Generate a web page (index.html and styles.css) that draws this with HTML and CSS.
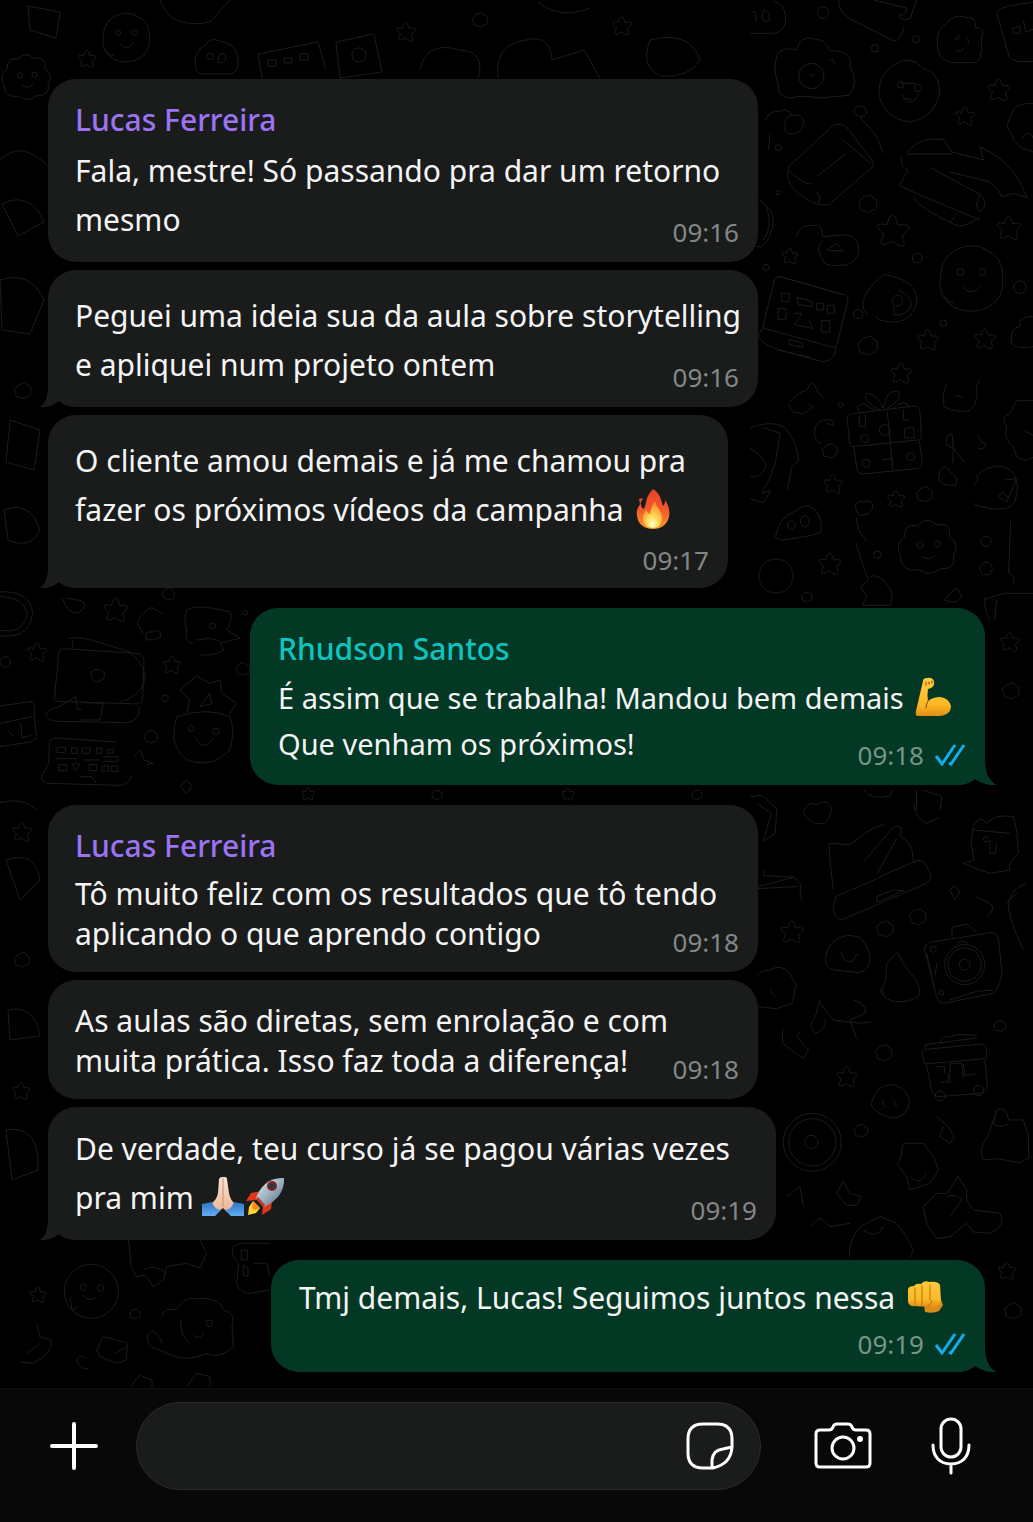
FILE: index.html
```html
<!DOCTYPE html>
<html lang="pt-BR">
<head>
<meta charset="utf-8">
<meta name="viewport" content="width=device-width, initial-scale=1">
<title>Conversa</title>
<link rel="stylesheet" href="styles.css">
</head>
<body>
<svg class="defs" aria-hidden="true">
  <defs>
    <linearGradient id="flame" x1="0" y1="0" x2="0" y2="1"><stop offset="0" stop-color="#e8402a"/><stop offset=".5" stop-color="#f4572a"/><stop offset="1" stop-color="#fb9a2c"/></linearGradient>
    <radialGradient id="glow" cx=".5" cy=".85" r=".75"><stop offset="0" stop-color="#fffde0"/><stop offset=".35" stop-color="#ffe25a"/><stop offset="1" stop-color="#fb8a2a"/></radialGradient>
    <linearGradient id="skin" x1="0" y1="0" x2="0" y2="1"><stop offset="0" stop-color="#ffcb3d"/><stop offset=".7" stop-color="#fcb827"/><stop offset="1" stop-color="#e08e14"/></linearGradient>
    <linearGradient id="pale" x1="0" y1="0" x2="0" y2="1"><stop offset="0" stop-color="#fbe3d0"/><stop offset="1" stop-color="#e9b597"/></linearGradient>
    <linearGradient id="sleeve" x1="0" y1="0" x2="0" y2="1"><stop offset="0" stop-color="#2f74c4"/><stop offset="1" stop-color="#63aef2"/></linearGradient>
    <linearGradient id="hull" x1="0" y1="0" x2="1" y2="1"><stop offset="0" stop-color="#dfe8ee"/><stop offset=".5" stop-color="#9fb2c2"/><stop offset="1" stop-color="#46607c"/></linearGradient>
  </defs>
  <symbol id="tail-in" viewBox="0 0 38 30"><path d="M8 0V8C8 18 6 26 0 30C7 31 14 28 19 24C24 28 30 30 38 30V0Z"/></symbol>
  <symbol id="tail-out" viewBox="0 0 40 30"><path d="M28 0V4C28 16 31 26 40 30C32 31 23 28 18 24C13 28 8 30 0 30V0Z"/></symbol>
  <symbol id="ticks" viewBox="0 0 32 24"><path d="M2 13L8 21L21 2M15 20L17 21L30 2"/></symbol>
  <symbol id="star" class="doodle" viewBox="-20 -20 40 40" overflow="visible"><path d="M-1-16Q2-17 5-6Q15-7 16-4Q16-1 9 4Q13 14 10 15Q7 16-1 10Q-11 16-12 12Q-12 8-9 3Q-17-3-15-6Q-13-8-6-6Q-4-15-1-16Z"/></symbol>
  <symbol id="bloom" class="doodle" viewBox="-20 -20 40 40" overflow="visible"><path d="M-2-13Q6-18 9-9Q17-9 14-1Q17 9 8 10Q1 17-5 11Q-15 13-13 3Q-19-4-10-8Q-8-14-2-13Z"/></symbol>
  <symbol id="face" class="doodle" viewBox="-40 -40 80 80" overflow="visible"><path d="M-14-35Q4-42 18-33Q38-24 36 0Q38 22 20 32Q0 42-20 32Q-39 20-35-4Q-34-26-14-35Z"/><circle cx="-12" cy="-8" r="4"/><circle cx="13" cy="-8" r="4"/><path d="M-10 8Q0 22 12 7M-30 20Q-25 28-19 27"/></symbol>
  <symbol id="puff" class="doodle" viewBox="-40 -40 80 80" overflow="visible"><path d="M-34 10Q-42-4-29-14Q-30-32-12-29Q0-42 12-30Q32-34 29-14Q43-6 34 9Q38 28 17 27Q2 38-10 28Q-34 32-34 10Z"/><circle cx="-9" cy="-4" r="4"/><circle cx="13" cy="-5" r="4"/><path d="M-7 11Q4 18 11 9"/></symbol>
  <symbol id="blob" class="doodle" viewBox="-40 -40 80 80" overflow="visible"><path d="M-32 14Q-36-8-17-18Q-8-30 2-24Q28-22 31 2Q34 22 20 25H-22Q-31 23-32 14Z"/><circle cx="-10" cy="-1" r="5"/><path d="M4-4Q14-8 13 4Q8 12 1 7Z"/></symbol>
</svg>

<div class="chat">
  <svg class="wallpaper" viewBox="0 0 1033 1390" preserveAspectRatio="xMidYMin slice" aria-hidden="true">
    <!-- right edge, top -->
    <g transform="translate(750 0) scale(.3333)">
      <path d="M0 100H70Q110 96 107 48Q100 8 70 4M6 38Q20 22 18 66M40 30Q60 30 58 62Q38 70 36 48ZM266 0Q262 32 300 56L430 122Q450 128 462 82M370 0L470 24Q470 46 448 46Q450 66 480 56L500 0"/>
      <path d="M84 160Q100 140 140 150Q150 108 185 116Q230 116 238 152Q310 150 300 200Q330 250 296 286L210 294Q160 284 120 294Q80 290 84 250Q66 200 84 160Z"/><circle cx="184" cy="228" r="38"/><path d="M176 222Q184 236 196 222M238 180Q256 176 252 192"/>
      <path d="M590 70Q610 40 645 52Q680 48 676 82Q708 80 694 120Q700 190 670 188H606Q560 180 562 130Q560 88 590 70ZM615 110Q620 132 628 104M650 110Q660 130 652 134M618 150Q640 160 640 142"/>
      <path d="M740 40Q744 22 800 14L849 6M740 40L778 170Q790 190 849 184M786 86L810 78V100H790ZM820 60L828 96L849 88"/>
      <path d="M430 196Q480 160 520 206Q560 210 570 270Q560 350 480 366Q400 356 386 280Q386 226 430 196ZM450 250H500M456 284Q480 330 508 280M460 296L486 298"/><circle cx="452" cy="254" r="10"/><circle cx="504" cy="264" r="11"/>
      <path d="M116 500L250 376Q280 364 296 390L366 480Q376 494 360 508L236 614Q200 620 160 590Q120 570 112 530ZM200 530L290 460M274 416L362 490M116 512Q170 560 184 550M200 576Q220 600 200 612"/>
      <path d="M470 460Q500 420 540 418H580L606 456L700 480L690 440L740 468Q790 510 806 540L832 594L790 580L754 590Q750 570 720 546L600 516M454 470Q450 500 474 510L448 556Q470 570 690 660M490 592Q510 626 610 672Q640 690 690 650M544 504L690 584Q720 610 690 636Q670 620 690 584M606 462H470M620 640L600 670"/>
      <path d="M330 350Q300 340 318 322Q340 310 350 334Q350 350 330 350L380 410L400 460M46 360Q60 330 90 334Q110 320 125 346Q160 340 162 370Q154 402 124 402Q98 400 106 376Q100 354 125 346M60 400L56 450"/>
      <path d="M140 710Q150 670 190 676Q220 670 218 710L290 704Q330 710 326 760Q310 800 270 796Q220 804 214 770Q196 740 218 722M230 750L260 730L280 754Z"/>
      <path d="M90 830Q76 830 72 846L38 984L250 1042Q260 1040 262 1030L294 900Q294 886 280 884ZM36 986L24 1010Q40 1036 90 1050L220 1086Q256 1080 258 1042M118 1018L158 1030V1042L118 1034ZM82 1050L180 1072M90 830L280 884"/>
      <path d="M94 880H118V904H94ZM140 892L186 904V920L146 914ZM198 910H220V930H200ZM232 916H254V940H232ZM84 926H108V958H84ZM132 940H156L134 974L190 986L176 960M214 962H240V996H214Z"/>
      <path d="M404 824Q500 840 500 900Q490 970 420 966Q376 960 380 950M404 824Q370 840 344 890Q330 930 354 944M444 870Q490 890 482 920Q470 946 432 946V920"/><circle cx="442" cy="902" r="16"/><circle cx="324" cy="942" r="14"/>
      <path d="M28 600Q80 630 68 680Q50 750 20 740M50 622Q70 680 40 720"/>
      <circle cx="219" cy="38" r="17"/><circle cx="498" cy="118" r="11"/><circle cx="375" cy="145" r="11"/><circle cx="84" cy="578" r="6"/><circle cx="580" cy="970" r="10"/><circle cx="48" cy="802" r="9"/><circle cx="810" cy="862" r="19"/><circle cx="502" cy="774" r="15"/><circle cx="85" cy="443" r="9"/>
      <path d="M849 310Q790 310 786 340Q760 380 784 400Q790 440 849 456M814 418Q840 380 849 414M849 950Q800 950 810 980Q780 980 784 1030Q800 1050 849 1040"/>
    </g>
    <use href="#star" x="873" y="211" width="40" height="40"/>
    <use href="#star" x="985" y="76" width="28" height="28"/>
    <use href="#star" x="953" y="104" width="24" height="24"/>
    <use href="#star" x="994" y="213" width="30" height="30"/>
    <use href="#bloom" x="856" y="192" width="24" height="24"/>
    <use href="#face" x="936" y="244" width="70" height="70"/>
    <use href="#bloom" x="855" y="333" width="26" height="26"/>
    <use href="#star" x="915" y="327" width="26" height="26"/>
    <use href="#star" x="972" y="326" width="26" height="26"/>
    <use href="#star" x="888" y="360" width="26" height="26"/>
    <use href="#star" x="780" y="246" width="20" height="20"/>
    <!-- right edge, gift row -->
    <g transform="translate(750 380) scale(.3333)">
      <path d="M292 116Q290 104 304 102L490 78Q510 78 510 96L514 170Q516 180 504 180L310 200Q300 200 298 186ZM312 202L320 264Q324 284 340 282L500 266Q518 262 516 240L508 182M412 94L428 268M390 90Q330 60 350 40Q380 40 400 84Q410 26 446 34Q458 60 410 86M330 98Q310 80 340 70L376 92M424 88Q470 50 476 84M328 106V140H346V100M460 90V120H478M464 146L490 142L494 174H464ZM394 240L428 236V266"/>
      <circle cx="344" cy="176" r="12"/><circle cx="348" cy="250" r="12"/><circle cx="482" cy="230" r="12"/><circle cx="404" cy="150" r="16"/>
      <path d="M0 144Q60 120 100 140Q140 180 146 240L126 260L112 330M0 204Q40 230 50 256Q30 300 0 290M40 142L90 160L76 250Q60 300 36 340L62 332L40 368L0 356M120 66Q140 40 170 30Q190-10 200 30L220 54M116 72L130 96L160 102L190 80L172 70"/>
      <path d="M590 10Q576 40 582 80Q620 100 660 92Q690 60 678 20L690 0M616 50Q630 44 640 52M194 150Q200 116 236 120Q256 120 250 136L230 130M194 150Q190 180 214 192M684 282Q740 240 780 270Q810 300 800 340Q800 390 740 388Q680 380 670 370M670 316Q690 300 680 284M764 300L800 296L770 366L744 350L760 336L776 356M849 62H800L780 100Q750 110 770 140Q760 180 790 200L800 230Q830 250 849 232M820 150L849 166"/>
      <path d="M76 470Q90 410 130 396Q170 364 196 390Q220 420 212 456Q190 468 100 480Q80 480 76 470Z"/><ellipse cx="124" cy="435" rx="11" ry="14"/><ellipse cx="164" cy="424" rx="13" ry="17"/>
      <path d="M318 390Q310 360 342 366Q370 356 368 384Q362 402 330 408ZM318 410L326 450L350 484M318 490L340 560L356 600L332 620L350 650L336 676H420Q440 640 400 600Q370 580 360 592M782 424L776 580Q800 590 790 610M700 660L760 640H849M706 650Q700 690 720 720M740 660L734 720"/>
      <circle cx="708" cy="484" r="15"/><circle cx="708" cy="566" r="19"/><circle cx="382" cy="524" r="11"/><circle cx="272" cy="74" r="7"/>
      <path d="M606 160L590 170V196L610 206ZM610 210L608 250M610 204L644 248M684 164Q690 190 708 190Q706 210 684 206M570 270Q590 250 600 274Q630 300 616 316Q580 320 566 300ZM600 640L620 624L636 650Q620 676 584 660Z"/>
    </g>
    <use href="#bloom" x="820" y="441" width="20" height="20"/>
    <use href="#star" x="821" y="472" width="24" height="24"/>
    <use href="#star" x="885" y="488" width="22" height="22"/>
    <use href="#bloom" x="914" y="484" width="21" height="21"/>
    <use href="#puff" x="896" y="517" width="62" height="62"/>
    <use href="#star" x="816" y="550" width="28" height="28"/>
    <circle cx="776" cy="576" r="17"/>
    <!-- left edge -->
    <g transform="translate(0 580) scale(.3333)">
      <path d="M0 36Q90 30 98 100Q90 166 30 168H0M0 50Q70 50 82 100Q76 140 40 152H0M188 56Q200 100 236 98Q270 74 244 62L196 54M412 130Q420 100 456 82L490 104M412 130L430 160M440 180Q430 150 460 156Q480 140 482 170Q460 184 440 180"/>
      <path d="M176 216Q178 206 190 206L410 220Q430 222 432 240L428 356Q426 372 412 372L170 364Q160 360 164 350ZM172 382L228 350L232 388L246 388M172 382Q136 390 138 410Q150 424 180 424L380 428Q420 424 418 380M244 368L310 370L300 420H240M206 176Q240 166 306 190L390 216Q440 260 436 300Q420 350 360 366M216 180L220 206M274 276Q290 260 312 276Q320 300 290 306Q270 300 274 276Z"/>
      <path d="M148 490Q150 476 164 474L352 486M148 490L146 550L124 590Q126 610 144 610L360 616Q390 610 396 586M172 502H196V518H172ZM214 504H232V520H214ZM246 504H270V520H246ZM290 504H306V520H290ZM322 508H340V520H322ZM176 554H200V572H176ZM216 552H240L226 572ZM268 554H290V572H268ZM306 558H326V574H306ZM334 558H354V574H334ZM166 536H230M250 540H300M308 530H354V544H308M240 590H276L288 610"/>
      <path d="M560 90Q590 70 690 96Q700 120 680 150L720 174L660 190L672 210Q640 230 600 224M560 90Q550 120 560 150Q550 190 580 190M590 180Q640 170 662 186M540 330L590 288L630 310L660 300L664 340L710 370L690 400M540 330L570 360L560 400M630 340L600 380L634 372Z"/>
      <path d="M530 410Q520 440 522 480Q540 540 580 546Q640 560 690 510Q706 450 690 410Q620 380 530 410ZM584 470Q610 520 640 474"/><circle cx="574" cy="446" r="9"/><circle cx="648" cy="454" r="10"/><circle cx="638" cy="138" r="9"/><circle cx="495" cy="355" r="10"/>
      <path d="M0 378L98 364Q106 370 102 400L110 470Q106 484 90 486L0 500M0 430L98 410M62 430L66 474L92 466M24 450L40 470M400 530L420 510L432 540L460 550L440 554M0 668Q70 650 110 690M540 620L560 600L576 620L560 640Z"/>
      <circle cx="506" cy="42" r="18"/><circle cx="16" cy="246" r="16"/><circle cx="736" cy="98" r="7"/>
    </g>
    <use href="#star" x="101" y="595" width="30" height="30"/>
    <use href="#star" x="25" y="640" width="24" height="24"/>
    <use href="#star" x="161" y="654" width="22" height="22"/>
    <use href="#bloom" x="142" y="728" width="18" height="18"/>
    <use href="#bloom" x="234" y="660" width="18" height="18"/>
    <!-- right edge, lower half -->
    <g transform="translate(750 790) scale(.3333)">
      <path d="M0 20L36 16L80 56L76 130L40 154L64 70L20 40M160 70Q170 30 200 44Q240 20 244 60Q240 100 210 102Q180 100 160 70M24 290L130 262Q160 280 150 300L154 330M130 262L40 256L44 240M20 296L140 290M340 0Q360 30 420 18L428 0M490 40Q500 90 530 100L566 82M500 0V60M520 0L576 20L570 60"/>
      <path d="M236 160L300 164L360 120L404 102M236 160L240 210L250 300M340 216L432 110Q460 100 452 140Q490 160 488 200L496 220M382 250L440 146M258 330Q246 340 250 360Q256 390 280 388L530 280Q544 270 542 256Q530 220 516 212L500 212L420 246L360 276L256 320ZM380 336V320L430 300L460 302L400 330Z"/>
      <path d="M670 110Q690 70 710 100Q740 70 790 80L800 120L806 190Q770 220 780 240L720 250L690 240L640 220L672 210L664 160ZM720 150V190L736 190L740 160M670 120L780 130"/><circle cx="708" cy="148" r="8"/>
      <path d="M226 510Q230 450 290 436L326 440Q360 470 360 510Q356 540 330 548L250 540Q226 530 226 510ZM274 486Q280 520 306 514L324 490M442 486L460 520L490 560Q516 590 506 620Q470 640 430 634Q390 620 390 596M442 486L410 520Q410 560 404 580Q390 600 404 616"/>
      <path d="M524 480Q524 460 544 456L724 428Q744 430 746 450L756 550Q750 590 730 610L580 640Q564 640 560 620ZM606 440V412L650 402L680 426M620 462Q636 446 654 462M530 490L546 560M560 520L556 556M600 630L680 604L730 600"/><circle cx="644" cy="524" r="60"/><circle cx="644" cy="524" r="50"/><circle cx="644" cy="524" r="16"/><circle cx="550" cy="478" r="9"/><circle cx="574" cy="608" r="7"/>
      <path d="M516 790Q516 780 530 778L694 762Q710 764 710 780L708 806L524 822ZM530 824L544 900Q550 920 570 920L690 910Q714 904 712 880L704 810M526 776V764L680 744Q680 736 660 734H620L600 740Q570 736 572 760M560 830H584V850M568 876H594V850M600 880V820H636L640 866M640 824L646 856L680 852"/><circle cx="570" cy="918" r="15"/><circle cx="686" cy="902" r="15"/>
      <circle cx="187" cy="1057" r="87"/><circle cx="187" cy="1057" r="71"/><circle cx="184" cy="1056" r="20"/>
      <path d="M20 560Q30 540 60 540Q90 520 120 550L138 586L126 640L80 656L24 650M60 600L76 620M210 640L250 690L330 700L364 696M210 630L196 680Q170 710 196 730Q230 720 226 690M310 630Q350 640 346 670L300 690L320 746M100 716Q90 760 110 770L160 806L176 780L140 740L150 726M560 980L596 1010L612 1040L600 1060L570 1040L580 1010"/>
      <path d="M364 940Q380 880 430 884Q480 900 478 940Q470 980 430 984Q390 980 366 950ZM400 930Q396 950 410 950M430 930L440 950M740 960Q770 946 776 990L820 990L836 1040V1104L810 1118L740 1106L700 1110Q680 1080 714 1040ZM740 960L730 1000Q750 1020 776 1000M450 1110L460 1060L520 1060L550 1100L566 1140L540 1180L480 1200L470 1160L440 1120ZM480 1160Q510 1190 530 1150"/>
      <path d="M520 1250L560 1210L590 1210L624 1160L650 1200V1230L670 1260L750 1270Q770 1310 720 1330L670 1326L650 1300L600 1340L560 1346L530 1300ZM590 1220Q620 1210 636 1230L600 1280M300 1406Q290 1360 330 1310L390 1280L440 1300L470 1340L490 1380L480 1406M340 1320Q380 1350 400 1310M260 1210L280 1174L300 1210L334 1220L320 1246H290ZM110 1220L150 1190L160 1250M180 1310L210 1284L240 1310L300 1300"/>
      <path d="M830 280Q770 300 776 360L790 410L820 480M770 340L800 310M600 300L612 288L630 306L614 330ZM680 320L720 340Q740 360 710 380"/>
    </g>
    <use href="#bloom" x="907" y="906" width="22" height="22"/>
    <use href="#bloom" x="874" y="918" width="22" height="22"/>
    <use href="#star" x="778" y="918" width="28" height="28"/>
    <use href="#bloom" x="873" y="1042" width="22" height="22"/>
    <use href="#star" x="834" y="1064" width="26" height="26"/>
    <use href="#bloom" x="992" y="1018" width="16" height="16"/>
    <use href="#bloom" x="852" y="1122" width="18" height="18"/>
    <!-- lower left -->
    <g transform="translate(20 1180) scale(.3333)">
      <path d="M326 180L334 260L350 290L376 286L400 320L430 300L440 260L500 250L540 264L560 220L540 180M370 270Q400 250 440 280M640 200L660 190H750M640 200Q630 230 656 250L650 310Q660 340 690 340L750 330M664 210H682V240H664ZM670 256L684 264V290L670 284ZM700 250H740L750 290"/>
      <circle cx="214" cy="334" r="81"/><circle cx="190" cy="322" r="9"/><circle cx="242" cy="324" r="10"/><path d="M190 346Q210 370 230 350M150 350L156 390L176 380"/>
      <path d="M426 410Q430 380 470 390Q490 350 530 356Q600 350 610 390Q650 400 636 440L640 500Q600 540 560 520Q500 550 440 520L410 506Q380 500 382 470Q400 430 426 490M482 420Q480 470 510 490M520 466Q540 480 552 460"/><circle cx="568" cy="430" r="10"/>
      <path d="M230 510L250 470L290 480L322 490L320 540L290 550L240 530ZM286 520L320 500M50 430L60 470L94 480Q100 520 40 550L0 546M20 520L60 490M170 540Q180 520 196 534M170 540Q180 570 204 566M330 620L360 586L396 600V620M500 620L530 580L570 590V620"/>
    </g>
    <use href="#star" x="28" y="1285" width="20" height="20"/>
    <use href="#bloom" x="128" y="1307" width="14" height="14"/>
    <!-- top and left margins -->
    <path d="M258 54L318 42L326 70M258 54L262 78M268 60H276V66H268ZM284 58H292V63H284ZM300 54H308V60H300ZM336 42L374 34L382 72L340 78ZM352 56A7 7 0 1 0 366 54A7 7 0 1 0 352 56M420 70Q426 40 460 50Q486 52 478 78M498 78Q494 44 526 40Q550 34 552 60L584 50L600 78M538 2Q560 20 590 8M650 40Q690 30 700 60Q690 78 660 76Q640 66 650 40ZM160 0Q170 30 210 22L230 0M28 6L60 12L56 38L30 30Z"/>
    <path d="M0 160Q20 140 46 164M2 204Q30 190 44 222L18 236Z M0 280Q30 270 44 300L30 334L2 330ZM10 420L40 430L34 470L6 462ZM4 510Q30 500 40 530Q30 550 8 540ZM6 860Q36 850 40 880L20 900ZM8 1010Q34 1004 40 1036L10 1040ZM6 1130Q40 1124 38 1170L12 1180Z"/>
    <use href="#puff" x="0" y="52" width="52" height="52"/>
    <use href="#face" x="100" y="12" width="52" height="52"/>
    <use href="#blob" x="190" y="30" width="54" height="54"/>
    <use href="#star" x="76" y="48" width="22" height="22"/>
    <use href="#star" x="394" y="20" width="24" height="24"/>
    <use href="#bloom" x="470" y="10" width="20" height="20"/>
    <use href="#star" x="610" y="14" width="24" height="24"/>
    <use href="#bloom" x="12" y="380" width="22" height="22"/>
    <use href="#star" x="10" y="820" width="24" height="24"/>
    <use href="#bloom" x="12" y="950" width="20" height="20"/>
    <use href="#star" x="10" y="1080" width="22" height="22"/>
    <use href="#bloom" x="1000" y="680" width="22" height="22"/>
    <use href="#star" x="998" y="630" width="24" height="24"/>
    <use href="#bloom" x="1002" y="1300" width="22" height="22"/>
    <use href="#star" x="996" y="1260" width="22" height="22"/>
    <use href="#bloom" x="800" y="590" width="14" height="14"/>
    <use href="#star" x="300" y="786" width="16" height="16"/>
    <use href="#bloom" x="430" y="788" width="14" height="14"/>
    <use href="#star" x="560" y="786" width="16" height="16"/>
    <use href="#bloom" x="690" y="788" width="14" height="14"/>
  </svg>

  <main class="messages">
    <section class="group">
      <article class="bubble">
        <h2 class="author">Lucas Ferreira</h2>
        <p class="text">Fala, mestre! Só passando pra dar um retorno mesmo <time class="meta">09:16</time></p>
      </article>
      <article class="bubble">
        <p class="text">Peguei uma ideia sua da aula sobre storytelling e apliquei num projeto ontem <time class="meta">09:16</time></p>
        <svg class="tail" aria-hidden="true"><use href="#tail-in"/></svg>
      </article>
      <article class="bubble narrow stacked">
        <p class="text">O cliente amou demais e já me chamou pra fazer os próximos vídeos da campanha
          <svg class="emoji" viewBox="0 0 36 40" role="img" aria-label="fogo"><path fill="url(#flame)" d="M18 0C26 5 26 12 28 17C30 15 30 13 30 11C34 17 35 22 34 28C32 36 26 40 18 40C9 40 3 35 2 27C1 21 3 18 6 14C6 18 7 19 9 20C12 14 10 8 18 0ZM4 10L8 9L5 15Z"/><path fill="url(#glow)" d="M20 12C21 18 27 22 27 29C27 36 23 39 18 39C12 39 8 35 8 29C8 25 10 23 11 21C13 24 14 25 15 25C16 20 17 16 20 12Z"/></svg> <time class="meta">09:17</time></p>
        <svg class="tail" aria-hidden="true"><use href="#tail-in"/></svg>
      </article>
    </section>

    <section class="group sent">
      <article class="bubble medium">
        <h2 class="author">Rhudson Santos</h2>
        <p class="text">É assim que se trabalha! Mandou bem demais
          <svg class="emoji" viewBox="0 0 36 40" role="img" aria-label="bíceps"><path fill="url(#skin)" d="M8 4Q8 1 12 1Q17 0 19 4Q20 9 16 11L13 12Q12 17 13 24Q18 20 25 20Q34 21 36 29Q36 38 24 39H2Q0 38 1 34Z"/><path fill="none" stroke="#9a5b10" stroke-width="1.2" stroke-linecap="round" d="M11 5V8M14 5V7M17 4V6M13 24Q11 27 11 31"/></svg>
          Que venham os próximos! <span class="meta"><time>09:18</time><svg class="ticks" role="img" aria-label="Lida"><use href="#ticks"/></svg></span></p>
        <svg class="tail" aria-hidden="true"><use href="#tail-out"/></svg>
      </article>
    </section>

    <section class="group">
      <article class="bubble tight">
        <h2 class="author">Lucas Ferreira</h2>
        <p class="text">Tô muito feliz com os resultados que tô tendo aplicando o que aprendo contigo <time class="meta">09:18</time></p>
      </article>
      <article class="bubble tight">
        <p class="text">As aulas são diretas, sem enrolação e com muita prática. Isso faz toda a diferença! <time class="meta">09:18</time></p>
      </article>
      <article class="bubble wide">
        <p class="text">De verdade, teu curso já se pagou várias vezes pra mim
          <svg class="emoji large" viewBox="0 0 42 40" role="img" aria-label="mãos juntas"><path fill="url(#pale)" d="M17 2Q18 0 20 0H23Q25 0 25 2L27 16Q28 22 32 26L33 32L25 35L21 31L16 35L9 31L10 26Q15 22 16 16Z"/><path stroke="#c58e72" d="M21 1V30"/><path fill="url(#sleeve)" d="M0 27L10 25Q12 32 19 33L13 39H0ZM42 27L32 25Q30 32 23 33L29 39H42Z"/></svg><svg class="emoji large" viewBox="0 0 42 40" role="img" aria-label="foguete"><path fill="#e0371c" d="M17 14L7 16L2 24L13 23ZM28 24L27 32L18 38L19 28Z"/><path fill="#ffd33a" d="M9 24L16 31L12 36L4 38L5 30Z"/><path fill="#f98a20" d="M9 24L16 31L10 33L8 31Z"/><path fill="url(#hull)" d="M12 21C16 9 26 0 40 1C41 14 33 24 20 30Z"/><circle cx="28" cy="9" r="5" fill="#8b2520"/><circle cx="28" cy="9" r="3" fill="#2a3947"/><path stroke="#c03a26" stroke-width="3" d="M13 21L20 29"/></svg> <time class="meta">09:19</time></p>
        <svg class="tail" aria-hidden="true"><use href="#tail-in"/></svg>
      </article>
    </section>

    <section class="group sent">
      <article class="bubble short tight stacked">
        <p class="text">Tmj demais, Lucas! Seguimos juntos nessa
          <svg class="emoji" viewBox="0 0 36 40" role="img" aria-label="soco"><path fill="#d98c16" d="M17 28L33 20L36 28L32 34Q26 37 18 35Z"/><path fill="url(#skin)" d="M1 12Q2 9 7 9Q9 6 14 7Q17 3 22 5Q31 4 33 8L34 24Q32 31 25 30L5 29Q1 28 1 24Z"/><path fill="none" stroke="#c67c12" stroke-width="1.2" stroke-linecap="round" d="M8 11V28M15 9V29M23 8V23M25 24Q23 29 19 30"/></svg> <span class="meta"><time>09:19</time><svg class="ticks" role="img" aria-label="Lida"><use href="#ticks"/></svg></span></p>
        <svg class="tail" aria-hidden="true"><use href="#tail-out"/></svg>
      </article>
    </section>
  </main>
</div>

<footer class="composer">
  <button class="action" type="button" aria-label="Anexar"><svg class="icon" width="48" height="48" viewBox="0 0 48 48"><path stroke-width="4" d="M24 2V46M2 24H46"/></svg></button>
  <div class="field">
    <input class="entry" type="text" aria-label="Mensagem">
    <button class="action" type="button" aria-label="Figurinhas"><svg class="icon" width="48" height="48" viewBox="0 0 48 48"><path d="M17 2H31Q46 2 46 17V25Q45 42 27 46H17Q2 46 2 31V17Q2 2 17 2ZM26 46V38Q27 28 37 27L46 25"/></svg></button>
  </div>
  <button class="action camera" type="button" aria-label="Câmera"><svg class="icon" width="58" height="48" viewBox="0 0 58 48"><path d="M6 8H15Q18 8 19 5Q20 2 23 2H34Q37 2 38 5Q39 8 42 8H52Q56 8 56 12V41Q56 45 52 45H6Q2 45 2 41V12Q2 8 6 8Z"/><circle cx="29" cy="26" r="11"/><circle class="dot" cx="46" cy="17" r="3"/></svg></button>
  <button class="action mic" type="button" aria-label="Gravar áudio"><svg class="icon" width="40" height="58" viewBox="0 0 40 58"><rect x="10" y="2" width="20" height="38" rx="10"/><path d="M2 28C2 40 9 47 20 47S38 40 38 28M20 47V56"/></svg></button>
</footer>
</body>
</html>
```
FILE: styles.css
```css
* {
  box-sizing: border-box;
}

body {
  display: flex;
  flex-direction: column;
  min-height: 100vh;
  margin: 0;
  background: #000;
  color: #f4f4f4;
  font-family: "Noto Sans", "Open Sans", sans-serif;
  font-size: 30px;
}

.defs {
  position: absolute;
  width: 0;
  height: 0;
}

.chat {
  position: relative;
  flex: 1;
  overflow: hidden;
}

.wallpaper {
  position: absolute;
  inset: 0;
  width: 100%;
  height: 100%;
  fill: none;
  stroke: #1c1c1c;
}

.wallpaper path,
.wallpaper circle,
.wallpaper ellipse,
.doodle path,
.doodle circle {
  vector-effect: non-scaling-stroke;
}

.messages {
  position: relative;
  display: flex;
  flex-direction: column;
  gap: 20px;
  padding: 79px 48px 16px;
}

.group {
  display: flex;
  flex-direction: column;
  align-items: flex-start;
  gap: 8px;
  --surface: #1a1c1c;
  --author: #9c73f3;
  --line: 49px;
}

.group.sent {
  align-items: flex-end;
  --surface: #033824;
  --author: #0fc4c0;
}

.bubble {
  position: relative;
  width: 710px;
  max-width: 100%;
  padding: 21px 11px 18px 27px;
  border-radius: 28px;
  background: var(--surface);
}

.narrow { width: 680px; }
.wide { width: 728px; padding-top: 17px; }
.medium { width: 735px; --line: 46px; }
.short { width: 714px; padding-top: 18px; }
.tight { --line: 40px; }
.sent .bubble { padding-left: 28px; }

.author {
  margin: 0 0 6px;
  color: var(--author);
  font-size: 30px;
  font-weight: 500;
  line-height: 40px;
}

.tight .author {
  margin-bottom: 8px;
}

.text {
  position: relative;
  z-index: 1;
  display: flow-root;
  margin: 0;
  line-height: var(--line);
}

.medium .text {
  font-size: 29px;
}

.meta {
  display: flex;
  float: right;
  align-items: center;
  gap: 10px;
  margin: calc(var(--line) - 30px) 8px -10px 0;
  color: #858787;
  font-size: 26px;
  line-height: 36px;
}

.stacked .meta {
  margin-top: 8px;
  margin-bottom: -8px;
}

.sent .meta {
  color: #789487;
}

.ticks {
  width: 32px;
  height: 24px;
  fill: none;
  stroke: #12aef0;
  stroke-width: 3;
}

.emoji {
  width: 36px;
  height: 40px;
  margin: -8px 0 0 4px;
  vertical-align: -8px;
}

.emoji.large {
  width: 42px;
  margin-left: 0;
}

.tail {
  position: absolute;
  bottom: 0;
  left: -8px;
  width: 38px;
  height: 30px;
  fill: var(--surface);
}

.sent .tail {
  right: -12px;
  left: auto;
  width: 40px;
}

.composer {
  display: flex;
  align-items: center;
  padding: 13px 62px 33px 50px;
  border-top: 1px solid #101010;
  background: #080808;
}

.action {
  display: flex;
  padding: 0;
  border: 0;
  background: none;
  color: #fff;
}

.icon {
  fill: none;
  stroke: currentColor;
  stroke-width: 3;
  stroke-linecap: round;
  stroke-linejoin: round;
}

.dot {
  fill: currentColor;
  stroke: none;
}

.field {
  display: flex;
  flex: 1;
  align-items: center;
  height: 88px;
  margin-left: 38px;
  padding: 0 26px 0 40px;
  border: 1px solid #2a2b2b;
  border-radius: 44px;
  background: #1a1c1c;
}

.entry {
  flex: 1;
  min-width: 0;
  border: 0;
  outline: 0;
  background: none;
  color: inherit;
  font: inherit;
}

.camera { margin-left: 53px; }
.mic { margin-left: 59px; }
```
